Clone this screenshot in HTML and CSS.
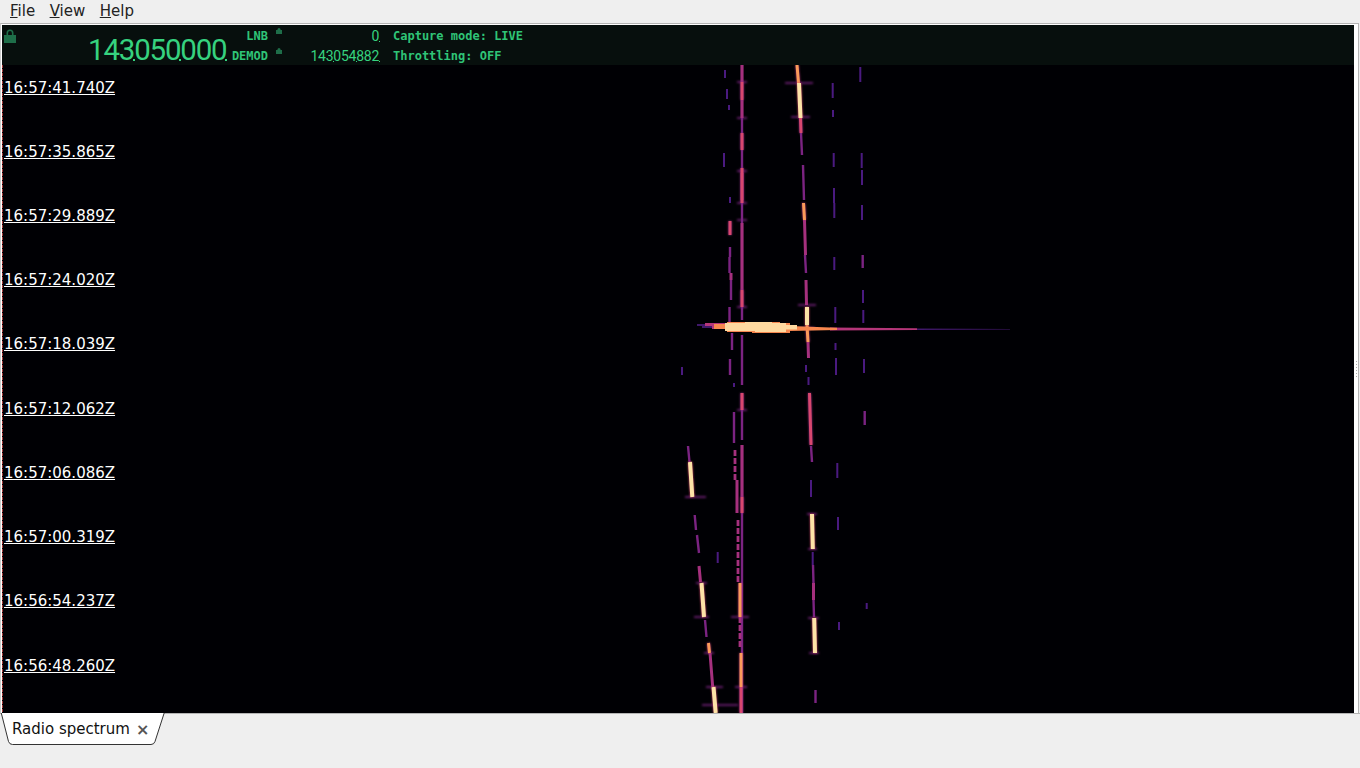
FILE: index.html
```html
<!DOCTYPE html>
<html lang="en">
<head>
    <meta charset="UTF-8">
    <title>Radio spectrum</title>
    <link rel="stylesheet" href="styles.css">
</head>
<body>
<nav class="menubar">
    <span><u>F</u>ile</span>
    <span><u>V</u>iew</span>
    <span><u>H</u>elp</span>
</nav>
<div class="frame">
    <main class="canvas">
        <!-- waterfall, same coordinates as the page -->
        <svg class="waterfall" viewBox="2 25 1352 688" width="1352" height="688">
            <path class="edge" d="M2.500 65V713"/>
            <path class="glow" d="M785 83H813M791 117H810M798 305H816M800 328H815M685 497H706M694 617H709M706 687H723M702 705H738M731 617H749M735 687H747M737 82H747M737 118H747M737 171H747M737 203H747M737 220H747M737 307H747M737 410H747M807 514H817M808 549H817M808 618H819M809 653H819M696 583H707M704 653H714"/>
            <g class="trace">
                <path class="purple" d="M742 65V320M742 335V385M742 393V440M742 445V713"/>
                <path class="dim" d="M727 89V99M724 153V167M730 197V203M682 367V375M734 383V387M832.700 83V98M833 110V117M833.700 153V167M834 188V203M834.300 203V218M834.300 257V270M835.300 307V323M835.500 343V350M836 358V375M837.300 463V478M838 517V530M839 622V630M717.700 552V563M860.300 67V82M861.700 153V168M862 170V185M862 205V220M863 290V303M863.300 310V323M864 359V373M866.700 603V609M725 70V78M729 105V110M806 365V372M808.500 377V385M811 480V497M812.700 552V565"/>
                <path class="purple" d="M730 247V257M729.500 257V273M731 280V300M729.500 307V323M732 333V350M730 359V375M734 412V443M801 133L802 155M803 165L804 200M811 446L812 462M813 565L813.500 583M813.500 600L814 617M815.500 690V703M688 446L689.500 462M694.700 515L696 530M697 535L699 553M705 620L706.500 637M862.700 255V268M864.700 411V425M805 255L806 273"/>
                <path class="noise" d="M735 450V480M738 520V583M740 617V647"/>
                <path class="magenta" d="M742 65V82M742 100V118M742 173V200M742 223V280M742 280V290M742 445V497M731 273V280M737 480V497M737 497V513M804.500 220L805.500 255M806 280L806.500 305M808 342L808.500 358M813.500 583L813.500 600M699 566L700.500 582M710 653L712.700 687"/>
                <path class="pink" d="M742 82V100M742 133V150M742 168V185M742 185V203M730 221V235M742 290V307M742 393V410M742 497V513M800.500 118L801 133M809.500 393L811 445M741 687V713"/>
                <path class="orange" d="M797 65L798.500 83M803.500 203L804.500 220M807 325L808 342M708.500 643L709.500 653M741 653V687M740 583V617"/>
                <path class="peak" d="M799 83L800.500 118M807 307V325M690 462L692.300 497M812 514L812.800 549M814.200 618L815 653M701.500 583L704 617M713.500 687L715.700 713"/>
            </g>
            <!-- the wide burst across the middle -->
            <g class="trace">
                <path class="burst-dim" d="M697 324H713V328H702V326H697ZM917 328.400L1010 329V329.600L917 330Z"/>
                <path class="burst-mag" d="M705 323H730V329H712V326H705ZM830 327.400L917 328.300V330L830 330.400Z"/>
                <path class="burst" d="M714 324H727V322H780V323H790V326L837 327.800V330L790 331V333H752V332H727V329H714Z"/>
                <path class="burst-hot" d="M725 323H745V322H772V323H786V325H797V329.500H786V332H755V331H725Z"/>
            </g>
        </svg>
        <header class="status">
            <svg class="lock" viewBox="0 0 12 14" width="12" height="14">
                <path d="M2.500 6V4a3.500 3.500 0 0 1 7 0v2h-1.600V4a1.900 1.900 0 0 0-3.800 0v2Z"/>
                <rect y="6" width="12" height="8"/>
            </svg>
            <div class="big-freq">143<i></i>050<i></i>000<i></i></div>
            <div class="labels">
                <span>LNB</span>
                <span>DEMOD</span>
            </div>
            <div class="mini-locks">
                <svg viewBox="0 0 6 6" width="6" height="6"><path d="M1.500 2.500V1.500a1.500 1.500 0 0 1 3 0v1Z"/><rect y="2" width="6" height="4"/></svg>
                <svg viewBox="0 0 6 6" width="6" height="6"><path d="M1.500 2.500V1.500a1.500 1.500 0 0 1 3 0v1Z"/><rect y="2" width="6" height="4"/></svg>
            </div>
            <div class="values">
                <span>0<i></i></span>
                <span>143<i></i>054<i></i>882<i></i></span>
            </div>
            <div class="info">
                <span>Capture mode: LIVE</span>
                <span>Throttling: OFF</span>
            </div>
        </header>
        <div class="times">
            <span>16:57:41.740Z</span>
            <span>16:57:35.865Z</span>
            <span>16:57:29.889Z</span>
            <span>16:57:24.020Z</span>
            <span>16:57:18.039Z</span>
            <span>16:57:12.062Z</span>
            <span>16:57:06.086Z</span>
            <span>16:57:00.319Z</span>
            <span>16:56:54.237Z</span>
            <span>16:56:48.260Z</span>
        </div>
    </main>
    <div class="grip"><div class="grip-dots"></div></div>
</div>
<div class="tabbar">
    <div class="tab">
        <svg class="tab-shape" viewBox="0 0 166 33" width="166" height="33">
            <path d="M1 -1L8.500 28.500Q9.500 31.500 12.500 31.500H151Q154 31.500 155 28.500L164.500 -1"/>
        </svg>
        <span class="tab-name">Radio spectrum</span>
        <span class="tab-close">×</span>
    </div>
</div>
</body>
</html>
```
FILE: styles.css
```css
* {
    box-sizing: border-box;
    padding: 0;
    margin: 0;
}
body {
    width: 1360px;
    height: 768px;
    overflow: hidden;
    background-color: #efefef;
    font-family: "DejaVu Sans", sans-serif;
    color: #111;
}
.menubar {
    display: flex;
    gap: 14.5px;
    height: 23px;
    padding-left: 10px;
    font-size: 15px;
    line-height: 22px;
    color: #222;
}
.frame {
    display: flex;
    width: 1359px;
    height: 691px;
    padding: 1px 0 0 1px;
    background-color: #fff;
    border: 1px solid #b4b4b4;
    border-left-color: #ccc;
    border-bottom: 0;
}
.canvas {
    position: relative;
    width: 1352px;
    height: 688px;
    background-color: #000004;
    overflow: hidden;
}
.waterfall {
    position: absolute;
    top: 0;
    left: 0;
    fill: none;
}
.edge {
    stroke: #a33a3a;
    stroke-width: 1;
    stroke-dasharray: 3 1;
}
.trace {
    filter: blur(0.5px);
}
.glow {
    stroke: #7b2382;
    stroke-width: 1.6;
    filter: blur(0.8px);
}
.dim {
    stroke: #4a1a80;
    stroke-width: 2;
}
.purple {
    stroke: #7b2382;
    stroke-width: 2.4;
}
.noise {
    stroke: #a5307e;
    stroke-width: 2.8;
    stroke-dasharray: 6 2;
}
.magenta {
    stroke: #a5307e;
    stroke-width: 3;
}
.pink {
    stroke: #d8476f;
    stroke-width: 3;
    filter: drop-shadow(0 0 1px #8a2a80);
}
.orange {
    stroke: #fb9a5a;
    stroke-width: 3;
    filter: drop-shadow(0 0 1px #b5367a);
}
.peak {
    stroke: #fde3a7;
    stroke-width: 4;
    filter: drop-shadow(0 0 1px #d8456f);
}
.burst {
    fill: #f7874f;
}
.burst-hot {
    fill: #fed9a0;
}
.burst-mag {
    fill: #b5367a;
}
.burst-dim {
    fill: #40186b;
}
.status {
    position: relative;
    display: flex;
    height: 40px;
    background-color: #070f0d;
    color: #2fc477;
    font-family: "DejaVu Sans Mono", monospace;
    font-size: 12px;
    font-weight: bold;
    line-height: 20px;
}
.lock {
    flex: none;
    margin: 4px 0 0 2px;
    fill: #1e6e49;
}
.big-freq {
    width: 136px;
    margin-left: 72px;
    font-family: Roboto, sans-serif;
    font-size: 29.5px;
    font-weight: 400;
    line-height: 50px;
    letter-spacing: -1.2px;
    white-space: nowrap;
    color: #36d27f;
}
.big-freq i {
    display: inline-block;
    width: 2px;
    height: 2px;
    margin: 0 -1px;
    vertical-align: -1px;
    background-color: currentColor;
}
.labels {
    display: flex;
    flex-direction: column;
    align-items: flex-end;
    width: 44px;
    padding-top: 1px;
}
.mini-locks {
    display: flex;
    flex-direction: column;
    gap: 14px;
    margin: 3px 0 0 8px;
    fill: #1e6e49;
}
.values {
    display: flex;
    flex-direction: column;
    align-items: flex-end;
    width: 97px;
    padding-top: 1px;
    font-family: Roboto, sans-serif;
    font-size: 14px;
    font-weight: 400;
    letter-spacing: -0.25px;
    color: #36d27f;
}
.values i {
    display: inline-block;
    width: 1px;
    height: 1px;
    margin-right: -1px;
    vertical-align: -1px;
    background-color: currentColor;
}
.info {
    display: flex;
    flex-direction: column;
    margin-left: 14px;
    padding-top: 1px;
}
.times {
    position: relative;
    display: flex;
    flex-direction: column;
    gap: 44.24px;
    padding: 12.5px 0 0 2px;
    font-size: 15px;
    line-height: 20px;
    color: #fff;
    text-decoration: underline;
}
.grip {
    display: flex;
    align-items: center;
    justify-content: center;
    width: 4px;
    height: 688px;
}
.grip-dots {
    width: 1px;
    height: 16px;
    background: repeating-linear-gradient(#aaa 0 1px, transparent 1px 3px);
}
.tabbar {
    height: 54px;
    border-top: 1px solid #b4b4b4;
    margin-top: -1px;
}
.tab {
    position: relative;
    display: flex;
    align-items: center;
    width: 166px;
    height: 32px;
    margin-top: -1px;
    padding-left: 12px;
    font-size: 15px;
}
.tab-shape {
    position: absolute;
    top: 0;
    left: 0;
    fill: #fff;
    stroke: #333;
    stroke-width: 1;
}
.tab-name {
    position: relative;
}
.tab-close {
    position: relative;
    margin-left: 6px;
    font-size: 16px;
    font-weight: bold;
    color: #555;
}
```
